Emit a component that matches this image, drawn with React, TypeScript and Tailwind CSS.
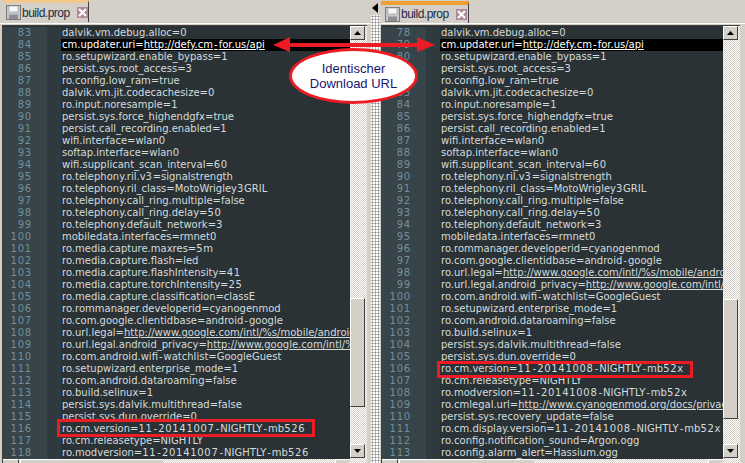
const leftLines = [
  "dalvik.vm.debug.alloc=0",
  "cm.updater.uri=|http://defy.cm-for.us/api",
  "ro.setupwizard.enable_bypass=1",
  "persist.sys.root_access=3",
  "ro.config.low_ram=true",
  "dalvik.vm.jit.codecachesize=0",
  "ro.input.noresample=1",
  "persist.sys.force_highendgfx=true",
  "persist.call_recording.enabled=1",
  "wifi.interface=wlan0",
  "softap.interface=wlan0",
  "wifi.supplicant_scan_interval=60",
  "ro.telephony.ril.v3=signalstrength",
  "ro.telephony.ril_class=MotoWrigley3GRIL",
  "ro.telephony.call_ring.multiple=false",
  "ro.telephony.call_ring.delay=50",
  "ro.telephony.default_network=3",
  "mobiledata.interfaces=rmnet0",
  "ro.media.capture.maxres=5m",
  "ro.media.capture.flash=led",
  "ro.media.capture.flashIntensity=41",
  "ro.media.capture.torchIntensity=25",
  "ro.media.capture.classification=classE",
  "ro.rommanager.developerid=cyanogenmod",
  "ro.com.google.clientidbase=android-google",
  "ro.url.legal=|http://www.google.com/intl/%s/mobile/android",
  "ro.url.legal.android_privacy=|http://www.google.com/intl/%s",
  "ro.com.android.wifi-watchlist=GoogleGuest",
  "ro.setupwizard.enterprise_mode=1",
  "ro.com.android.dataroaming=false",
  "ro.build.selinux=1",
  "persist.sys.dalvik.multithread=false",
  "persist.sys.dun.override=0",
  "ro.cm.version=11-20141007-NIGHTLY-mb526",
  "ro.cm.releasetype=NIGHTLY",
  "ro.modversion=11-20141007-NIGHTLY-mb526",
];

const rightLines = [
  ...leftLines.slice(0, 18),
  ...leftLines.slice(23, 33),
  "ro.cm.version=11-20141008-NIGHTLY-mb52x",
  "ro.cm.releasetype=NIGHTLY",
  "ro.modversion=11-20141008-NIGHTLY-mb52x",
  "ro.cmlegal.url=|http://www.cyanogenmod.org/docs/privacy",
  "persist.sys.recovery_update=false",
  "ro.cm.display.version=11-20141008-NIGHTLY-mb52x",
  "ro.config.notification_sound=Argon.ogg",
  "ro.config.alarm_alert=Hassium.ogg",
];

function FileIcon() {
  return (
    <svg width="15" height="15" viewBox="0 0 15 15" className="shrink-0">
      <rect x="0.5" y="0.5" width="14" height="14" fill="#c4c8cc" stroke="#77797c" />
      <rect x="3" y="1" width="9" height="6" fill="#f6f6f6" stroke="#9a9a9a" strokeWidth="0.6" />
      <rect x="3" y="9.5" width="9" height="4.5" fill="#8c8e92" />
    </svg>
  );
}

function Tab({ active }: { active?: boolean }) {
  return (
    <div className={active ? "w-[88px] h-[22px] mt-px bg-[#d4d0c8] border-r border-[#404040] border-t-[4px] border-t-[#f0a030] flex items-center pl-[4px]" : "w-[86px] h-[22px] ml-[3px] bg-[#d4d0c8] border-r border-[#404040] border-t-[3px] border-t-[#f2c890] flex items-center pl-[3px]"}>
      <FileIcon />
      <span className="ml-[1px] text-[12px] tracking-[-0.5px] text-[#1c2a4a] font-['Liberation_Sans',sans-serif]">build.prop</span>
      <span className="ml-[7px] w-[11px] h-[11px] bg-[#b08a9a] flex items-center justify-center shrink-0">
        <svg width="9" height="9" viewBox="0 0 9 9"><path d="M1 1l7 7M8 1L1 8" stroke="#fff" strokeWidth="2" /></svg>
      </span>
    </div>
  );
}

function Arrow({ up }: { up?: boolean }) {
  return (
    <div className="w-[15px] h-[14px] bg-[#d4d0c8] border border-t-white border-l-white border-r-[#404040] border-b-[#404040] flex items-center justify-center shrink-0">
      <svg width="7" height="4" viewBox="0 0 7 4"><path d={up ? "M3.5 0L7 4H0z" : "M0 0h7L3.5 4z"} fill="#000" /></svg>
    </div>
  );
}

// digits and hyphens run wider in the editor's font than in DejaVu
function Spaced({ text }: { text: string }) {
  return (
    <>
      {text.split(/(\d+|-)/).map((part, i) =>
        part === "-" ? (
          <span key={i} className="px-[1px]">-</span>
        ) : /^\d/.test(part) ? (
          <span key={i} className="tracking-[0.7px]">{part}</span>
        ) : (
          part
        )
      )}
    </>
  );
}

function CodeLine({ n, text, highlight }: { n: number; text: string; highlight?: boolean }) {
  const [plain, link] = text.split("|");
  return (
    <div className="flex h-[12px] leading-[12px]">
      <div className="w-[44px] shrink-0 bg-[#37444a] text-[#73909a] text-right pr-[15px] tracking-[0.8px]">{n}</div>
      <div className="w-[14px] shrink-0 bg-[#2f3a3f]" />
      <div className={highlight ? "flex-1 min-w-0 overflow-hidden whitespace-nowrap pl-[1px] bg-black text-white" : "flex-1 min-w-0 overflow-hidden whitespace-nowrap pl-[1px] text-[#d4dcdc]"}>
        <Spaced text={plain} />
        {link && <span className="underline"><Spaced text={link} /></span>}
      </div>
    </div>
  );
}

function Pane({ start, lines, spacer, thumb, hThumb, active, frame }: { start: number; lines: string[]; spacer: string; thumb: string; hThumb: string; active?: boolean; frame: string }) {
  return (
    <div className="flex-1 min-w-0 flex flex-col">
      <div className="h-[23px] shrink-0 flex items-start">
        <Tab active={active} />
      </div>
      <div className={`flex-1 min-h-0 border-t border-t-white pt-px flex flex-col ${frame}`}>
        <div className="flex-1 min-h-0 border-t border-l border-[#404040] flex flex-col">
          <div className="flex-1 min-h-0 flex bg-[#2a3236]">
            <div className="flex-1 min-w-0 pt-px font-['DejaVu_Sans',sans-serif] text-[10px] overflow-hidden">
              {lines.map((line, i) => (
                <CodeLine key={i} n={start + i} text={line} highlight={i === 1} />
              ))}
            </div>
            <div className="w-[17px] shrink-0 pr-[2px] flex flex-col bg-[repeating-conic-gradient(#d4d0c8_0%_25%,#ffffff_0%_50%)] bg-[length:2px_2px]">
              <Arrow up />
              <div className={spacer} />
              <div className={`${thumb} shrink-0 bg-[#d4d0c8] border border-t-white border-l-white border-r-[#404040] border-b-[#404040]`} />
              <div className="flex-1" />
              <Arrow />
              <div className="h-px shrink-0" />
            </div>
          </div>
          <div className="h-[4px] shrink-0 flex bg-[repeating-conic-gradient(#d4d0c8_0%_25%,#ffffff_0%_50%)] bg-[length:2px_2px] overflow-hidden">
            <div className="w-[16px] bg-[#d4d0c8] border-t border-t-white border-r border-r-[#404040]" />
            <div className={`${hThumb} ml-px bg-[#d4d0c8] border-t border-l border-white border-r-[#404040]`} />
            <div className="flex-1" />
            <div className="w-[15px] bg-[#d4d0c8] border-t border-l border-white" />
            <div className="w-[17px]" />
          </div>
        </div>
      </div>
    </div>
  );
}

export default function App() {
  return (
    <div className="relative w-[745px] h-[463px] overflow-hidden bg-[#d4d0c8] flex">
      <div className="w-[370px] shrink-0 flex">
        <Pane start={83} lines={leftLines} spacer="h-[258px] shrink-0" thumb="h-[109px]" hThumb="w-[143px]" frame="pl-[2px] pr-[3px]" />
      </div>
      <div className="w-[11px] shrink-0 flex flex-col items-center pt-[3px]">
        <svg width="6" height="10" viewBox="0 0 6 10" className="mb-[2px] mr-[1px]"><path d="M6 0v10L0 5z" fill="#000" /></svg>
        <div className="flex-1 w-[9px] bg-[radial-gradient(#8a8a8a_45%,#ffffff_50%)] bg-[length:3px_3px]" />
      </div>
      <div className="flex-1 min-w-0 flex">
        <Pane start={78} lines={rightLines} spacer="h-[259px] shrink-0" thumb="h-[120px]" hThumb="w-[135px]" frame="pr-[5px]" active />
      </div>

      {/* annotations */}
      <svg width="745" height="463" viewBox="0 0 745 463" className="absolute inset-0 pointer-events-none">
        <path d="M273 45L290 37V43H417V37L435 45L417 52V47H290V52z" fill="#ed1c24" />
        <rect x="58.5" y="420.5" width="255" height="15" fill="none" stroke="#ed1c24" strokeWidth="3" />
        <rect x="438.5" y="362.5" width="253" height="14" fill="none" stroke="#ed1c24" strokeWidth="3" />
      </svg>
      <div className="absolute left-[289px] top-[48px] w-[129px] h-[56px] rounded-[50%] bg-white border-[3px] border-[#ed1c24] flex flex-col items-center justify-center font-['Liberation_Sans',sans-serif] text-[13px] leading-[15px] text-[#16166e]">
        <span>Identischer</span>
        <span>Download URL</span>
      </div>
    </div>
  );
}
